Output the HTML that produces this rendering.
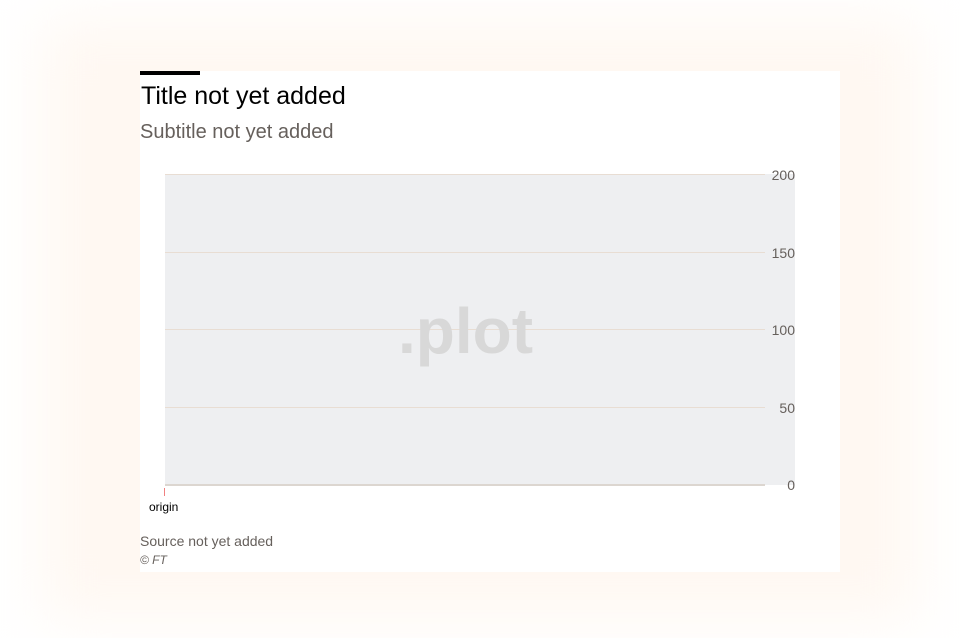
<!DOCTYPE html>
<html><head><style>
html,body{margin:0;padding:0;width:960px;height:638px;background:#fff;overflow:hidden;font-family:"Liberation Sans",sans-serif}
.glow{position:absolute;left:40px;top:20px;width:880px;height:600px;background:#fff8f2;filter:blur(30px);}
.card{position:absolute;left:140px;top:71px;width:700px;height:501px;background:#fff}
.bar{position:absolute;left:0;top:0;width:60px;height:4px;background:#000}
.title{position:absolute;left:1px;top:11px;font-size:25px;color:#000}
.sub{position:absolute;left:0;top:50px;font-size:20px;color:#66605c}
.plot{position:absolute;left:25px;top:103px;width:630px;height:311px;background:#eeeff1}
.g{position:absolute;left:25px;width:600px;height:1px;background:#e8ddd3}
.lab{position:absolute;right:45px;font-size:14px;color:#66605c;text-align:right}
.wm{position:absolute;left:258px;top:223px;font-size:64px;font-weight:bold;color:#d8d8d8}
.src{position:absolute;left:0;top:462px;font-size:14px;color:#66605c}
.ft{position:absolute;left:0;top:482px;font-size:12px;font-style:italic;color:#66605c}
</style></head><body>
<div class="glow"></div>
<div class="card">
<div class="bar"></div>
<div class="title">Title not yet added</div>
<div class="sub">Subtitle not yet added</div>
<div class="plot"></div>
<div class="g" style="top:103px"></div>
<div class="g" style="top:181px"></div>
<div class="g" style="top:258px"></div>
<div class="g" style="top:336px"></div>
<div class="g" style="top:413px;height:2px;background:#dcd6d0"></div>
<div class="lab" style="top:96px">200</div>
<div class="lab" style="top:174px">150</div>
<div class="lab" style="top:251px">100</div>
<div class="lab" style="top:329px">50</div>
<div class="lab" style="top:406px">0</div>
<div class="wm">.plot</div>
<div style="position:absolute;left:24px;top:417px;width:1px;height:8px;background:#f08080"></div>
<div style="position:absolute;left:9px;top:429px;font-size:12px;color:#000">origin</div>
<div class="src">Source not yet added</div>
<div class="ft">© FT</div>
</div>
</body></html>
